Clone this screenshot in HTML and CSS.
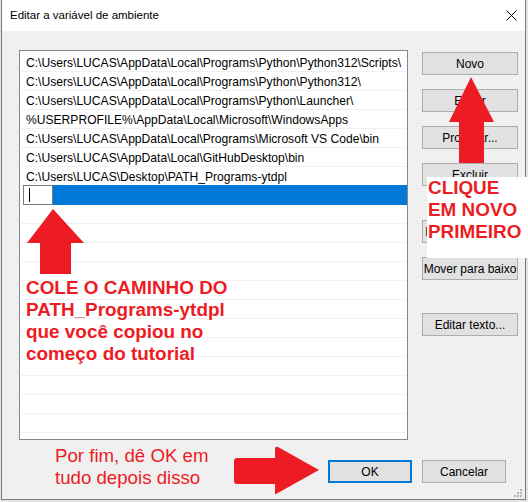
FILE: index.html
```html
<!DOCTYPE html>
<html lang="pt-BR">
<head>
<meta charset="utf-8">
<title>Editar a variável de ambiente</title>
<link rel="stylesheet" href="styles.css">
</head>
<body>
<div class="window">
  <div class="titlebar">
    <span class="title">Editar a variável de ambiente</span>
    <svg class="close" width="11" height="11" viewBox="0 0 11 11"><path d="M0.5 0.5 L10.5 10.5 M10.5 0.5 L0.5 10.5" stroke="#000" stroke-width="1" fill="none"/></svg>
  </div>
  <div class="content">
    <div class="main">
      <div class="listbox">
        <div class="row">C:\Users\LUCAS\AppData\Local\Programs\Python\Python312\Scripts\</div>
        <div class="row">C:\Users\LUCAS\AppData\Local\Programs\Python\Python312\</div>
        <div class="row">C:\Users\LUCAS\AppData\Local\Programs\Python\Launcher\</div>
        <div class="row">%USERPROFILE%\AppData\Local\Microsoft\WindowsApps</div>
        <div class="row">C:\Users\LUCAS\AppData\Local\Programs\Microsoft VS Code\bin</div>
        <div class="row">C:\Users\LUCAS\AppData\Local\GitHubDesktop\bin</div>
        <div class="row">C:\Users\LUCAS\Desktop\PATH_Programs-ytdpl</div>
        <div class="row selected"><div class="editbox"><span class="caret"></span></div></div>
        <div class="row"></div>
        <div class="row"></div>
        <div class="row"></div>
        <div class="row"></div>
        <div class="row"></div>
        <div class="row"></div>
        <div class="row"></div>
        <div class="row"></div>
        <div class="row"></div>
        <div class="row"></div>
        <div class="row"></div>
        <div class="row"></div>
        <div class="row"></div>
      </div>
      <div class="side">
        <button class="btn first">Novo</button>
        <button class="btn">Editar</button>
        <button class="btn">Procurar...</button>
        <button class="btn">Excluir</button>
        <button class="btn spaced">Mover para cima</button>
        <button class="btn">Mover para baixo</button>
        <button class="btn spaced2">Editar texto...</button>
      </div>
    </div>
    <div class="footer">
      <button class="btn wide ok">OK</button>
      <button class="btn wide">Cancelar</button>
    </div>
  </div>
  <svg class="grip" width="9" height="9" viewBox="0 0 9 9">
    <rect x="6" y="0" width="2" height="2" fill="#b4b4b4"/>
    <rect x="3" y="3" width="2" height="2" fill="#b4b4b4"/>
    <rect x="6" y="3" width="2" height="2" fill="#b4b4b4"/>
    <rect x="0" y="6" width="2" height="2" fill="#b4b4b4"/>
    <rect x="3" y="6" width="2" height="2" fill="#b4b4b4"/>
    <rect x="6" y="6" width="2" height="2" fill="#b4b4b4"/>
  </svg>
</div>

<svg class="arrows" width="528" height="502" viewBox="0 0 528 502">
  <polygon points="471,77 494,122 484,122 484,163 459,163 459,122 449,122" fill="#ed1c24"/>
  <polygon points="53,209 84,243 71,243 71,274 40,274 40,243 27,243" fill="#ed1c24"/>
  <path d="M237 458 L275 458 L275 448 Q276 446 278 447 L319 470 L276 494 L275 494 L275 484 L237 484 Q234 484 234 481 L234 461 Q234 458 237 458 Z" fill="#ed1c24"/>
</svg>

<div class="note note-clique">CLIQUE<br>EM NOVO<br>PRIMEIRO</div>
<div class="note note-cole">COLE O CAMINHO DO<br>PATH_Programs-ytdpl<br>que você copiou no<br>começo do tutorial</div>
<div class="note note-ok">Por fim, dê OK em<br>tudo depois disso</div>
</body>
</html>
```

FILE: styles.css
```css
html, body {
  margin: 0;
  padding: 0;
}

body {
  position: relative;
  width: 528px;
  height: 502px;
  background: #e4e4e4;
  overflow: hidden;
  font-family: "Liberation Sans", Arial, sans-serif;
}

.window {
  position: relative;
  box-sizing: border-box;
  margin-left: 1px;
  width: 525px;
  height: 500px;
  border: 1px solid #7a7a7a;
  border-top: none;
  background: #f0f0f0;
}

.titlebar {
  height: 31px;
  background: #ffffff;
  display: flex;
  align-items: center;
  justify-content: space-between;
  padding-left: 8px;
  padding-right: 8px;
}

.title {
  font-size: 11.5px;
  color: #000;
  line-height: 31px;
}

.close {
  display: block;
}

.content {
  padding: 19px 7px 0 17px;
}

.main {
  display: flex;
  gap: 14px;
}

.listbox {
  box-sizing: border-box;
  width: 389px;
  height: 390px;
  border: 1px solid #828790;
  background: #ffffff;
  padding: 2px 1px 0 1px;
  overflow: hidden;
}

.row {
  box-sizing: border-box;
  height: 19px;
  border-bottom: 1px solid #f0f0f0;
  padding: 2px 0 0 5px;
  font-size: 12.1px;
  line-height: 16px;
  color: #000;
  white-space: nowrap;
}

.row.selected {
  height: 20px;
  margin: -1px -1px 0 2px;
  padding: 0;
  border: none;
  background: #0078d7;
}

.editbox {
  position: relative;
  box-sizing: border-box;
  width: 30px;
  height: 20px;
  border: 1px solid #7a7a7a;
  background: #ffffff;
}

.caret {
  position: absolute;
  left: 5px;
  top: 2px;
  width: 1px;
  height: 14px;
  background: #000;
}

.side {
  width: 96px;
  display: flex;
  flex-direction: column;
  gap: 14px;
}

.btn {
  box-sizing: border-box;
  width: 96px;
  height: 23px;
  margin: 0;
  padding: 0;
  border: 1px solid #adadad;
  background: #e1e1e1;
  font-family: "Liberation Sans", Arial, sans-serif;
  font-size: 12px;
  color: #000;
  line-height: 20px;
  text-align: center;
  white-space: nowrap;
}

.btn.first {
  margin-top: 2px;
}

.btn.spaced {
  margin-top: 20px;
}

.btn.spaced2 {
  margin-top: 19px;
}

.footer {
  display: flex;
  justify-content: flex-end;
  gap: 10px;
  margin-top: 20px;
  padding-right: 12px;
}

.btn.wide {
  width: 84px;
}

.btn.ok {
  border: 2px solid #0078d7;
}

.grip {
  position: absolute;
  right: 2px;
  bottom: 1px;
}

.arrows {
  position: absolute;
  left: 0;
  top: 0;
  pointer-events: none;
}

.note {
  position: absolute;
  font-family: "Liberation Sans", Arial, sans-serif;
  font-size: 18.67px;
  color: #ed1c24;
  white-space: nowrap;
}

.note-clique {
  left: 427px;
  top: 177px;
  box-sizing: border-box;
  width: 101px;
  height: 81px;
  padding-left: 1px;
  background: #ffffff;
  font-size: 18.9px;
  font-weight: bold;
  line-height: 22px;
}

.note-cole {
  left: 26px;
  top: 277px;
  font-size: 18.9px;
  font-weight: bold;
  line-height: 22px;
}

.note-ok {
  left: 55px;
  top: 445px;
  line-height: 21.5px;
}
```
